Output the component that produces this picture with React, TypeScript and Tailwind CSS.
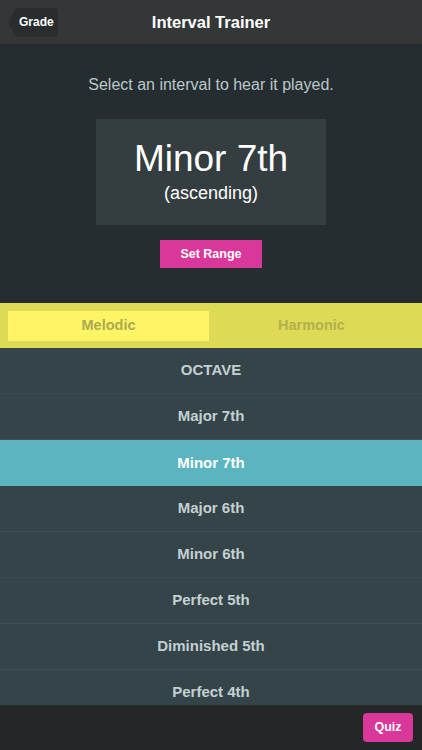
import React from "react"

export default function App() {
  const intervals = [
    "OCTAVE",
    "Major 7th",
    "Minor 7th",
    "Major 6th",
    "Minor 6th",
    "Perfect 5th",
    "Diminished 5th",
    "Perfect 4th",
  ]
  const selected = "Minor 7th"

  return (
    <div
      className="w-[422px] h-[750px] flex flex-col overflow-hidden bg-[#252d30]"
      style={{ fontFamily: '"Liberation Sans", Arial, sans-serif' }}
    >
      {/* Nav bar */}
      <div className="h-[44px] shrink-0 bg-[#343737] flex items-center relative">
        <div className="ml-[8px] flex items-center h-[29px]">
          <svg width="8" height="29" viewBox="0 0 8 29" className="block">
            <path d="M8 0 L8 29 L0 14.5 Z" fill="#2a2d2e" />
          </svg>
          <div className="h-[29px] pl-[3px] pr-[4px] bg-[#2a2d2e] rounded-r-[4px] flex items-center text-white text-[12px] font-bold">
            Grade
          </div>
        </div>
        <div className="absolute inset-0 flex items-center justify-center pointer-events-none">
          <span className="text-white text-[16.5px] font-bold">Interval Trainer</span>
        </div>
      </div>

      {/* Header area */}
      <div className="h-[259px] shrink-0 flex flex-col items-center">
        <p className="mt-[31px] text-[16px] leading-[20px] text-[#b9c7c8]">Select an interval to hear it played.</p>
        <div className="mt-[24px] w-[230px] h-[106px] bg-[#343d40] flex flex-col items-center justify-center">
          <span className="text-white text-[37px] leading-[40px]">Minor 7th</span>
          <span className="text-white text-[18px] leading-[24px] mt-[2px]">(ascending)</span>
        </div>
        <button className="mt-[15px] w-[102px] h-[28px] bg-[#d9379a] text-white text-[12.5px] font-bold">
          Set Range
        </button>
      </div>

      {/* Segmented control */}
      <div className="h-[45px] shrink-0 bg-[#dfda55] flex items-center px-[8px]">
        <div className="w-[201px] h-[30px] bg-[#fdf565] flex items-center justify-center text-[14.5px] font-bold text-[#abaa50]">
          Melodic
        </div>
        <div className="flex-1 h-[30px] flex items-center justify-center text-[14.5px] font-bold text-[#b3b04f]">
          Harmonic
        </div>
      </div>

      {/* Interval list */}
      <div className="flex-1 overflow-hidden bg-[#354448]">
        {intervals.map((name) => (
          <div
            key={name}
            className={
              name === selected
                ? "h-[46px] flex items-center justify-center bg-[#5bb5c0] text-white text-[15px] font-bold"
                : "h-[46px] flex items-center justify-center border-b border-[#3e4d51] text-[#c3d0d2] text-[15px] font-bold"
            }
          >
            {name}
          </div>
        ))}
      </div>

      {/* Bottom bar */}
      <div className="h-[45px] shrink-0 bg-[#232728] flex items-center justify-end pr-[9px]">
        <button className="w-[50px] h-[29px] rounded-[4px] bg-[#d9379a] text-white text-[12.5px] font-bold">
          Quiz
        </button>
      </div>
    </div>
  )
}
